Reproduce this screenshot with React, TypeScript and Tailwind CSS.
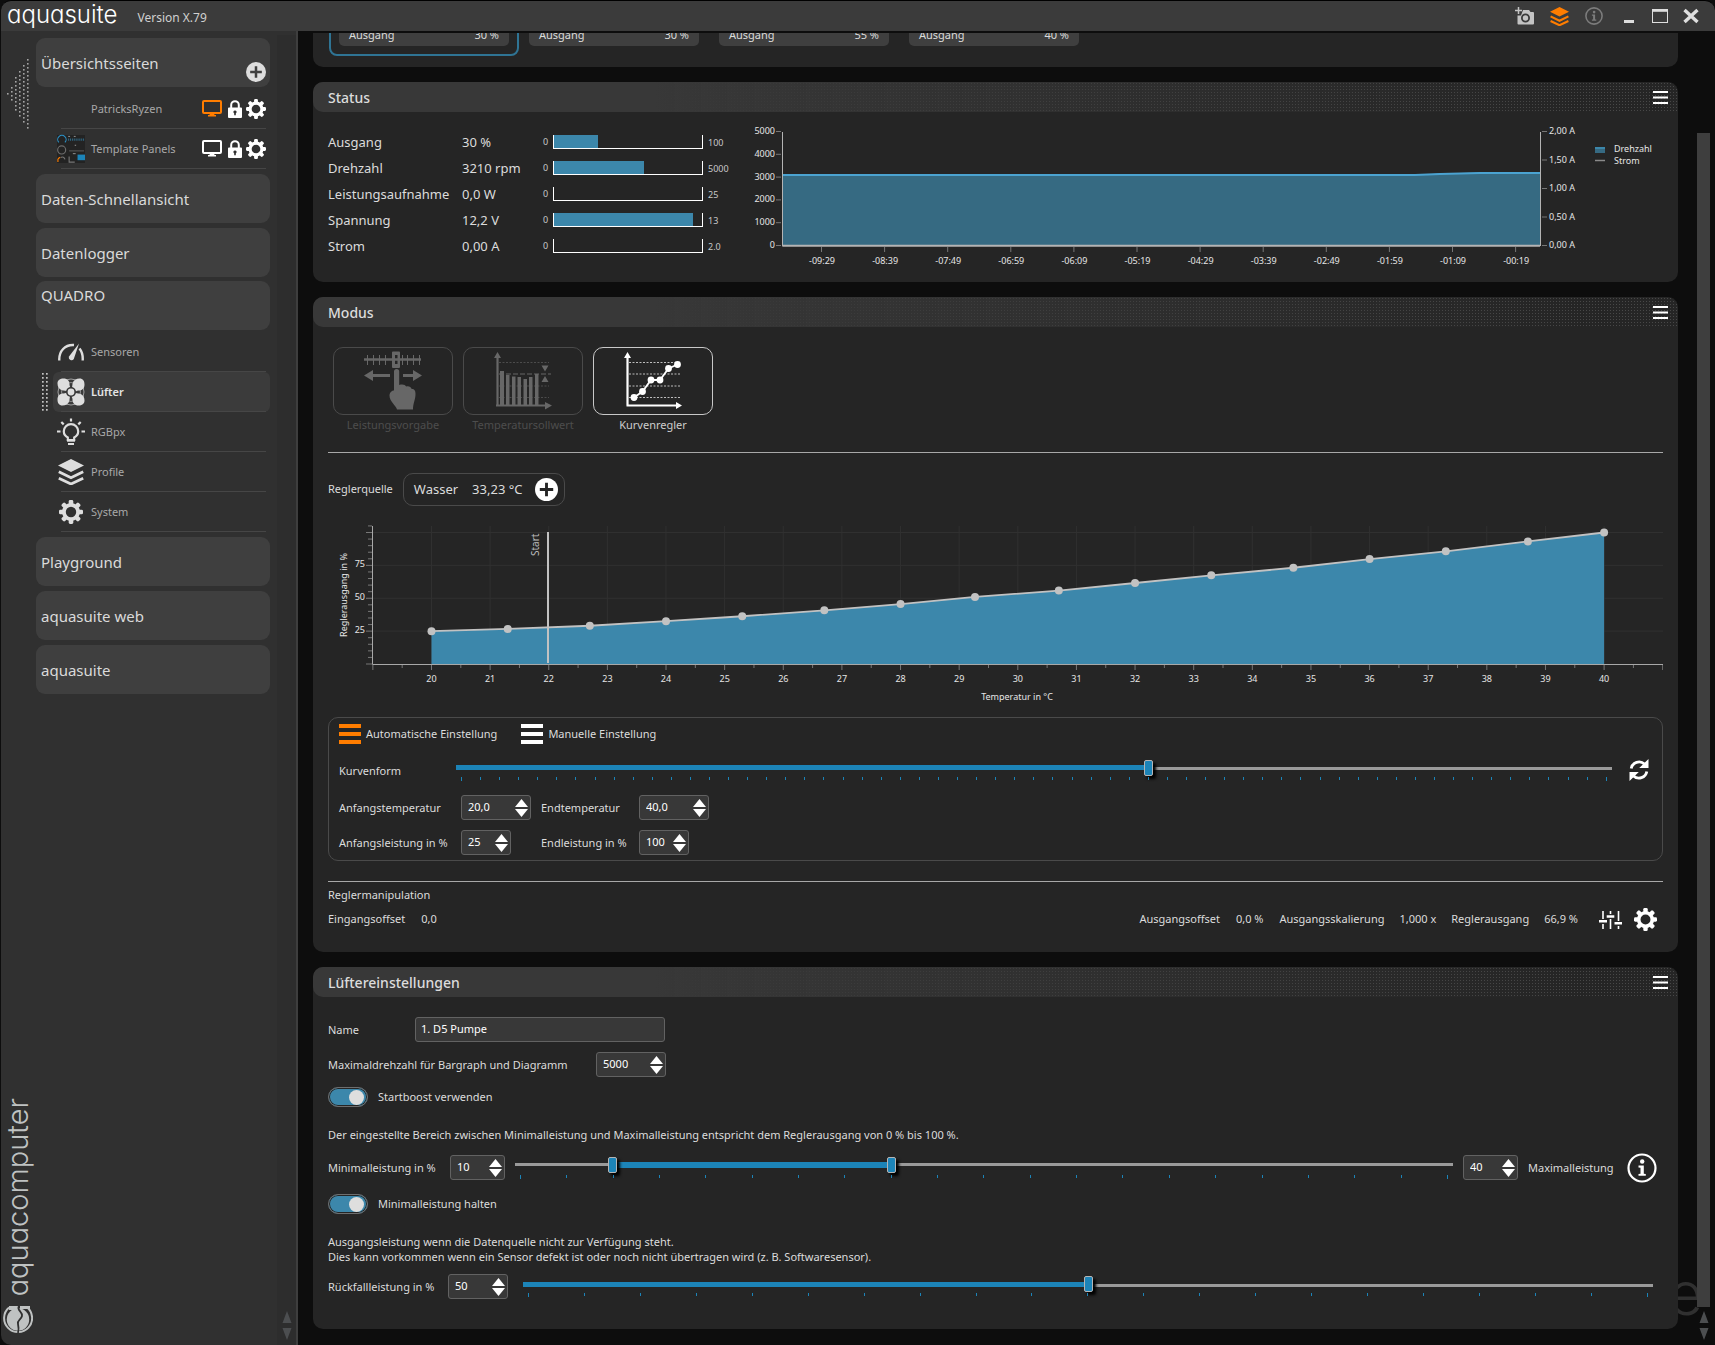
import { useState, type ReactNode } from "react";

// ---------- data ----------
const TOP_CARDS = ["30 %", "30 %", "55 %", "40 %"];

const STATUS_ROWS = [
  { label: "Ausgang", value: "30 %", max: "100", fill: 30 },
  { label: "Drehzahl", value: "3210 rpm", max: "5000", fill: 61 },
  { label: "Leistungsaufnahme", value: "0,0 W", max: "25", fill: 0 },
  { label: "Spannung", value: "12,2 V", max: "13", fill: 94 },
  { label: "Strom", value: "0,00 A", max: "2.0", fill: 0 },
];

const TIME_LABELS = [
  "-09:29", "-08:39", "-07:49", "-06:59", "-06:09", "-05:19",
  "-04:29", "-03:39", "-02:49", "-01:59", "-01:09", "-00:19",
];

// [Temperatur, Reglerausgang]
const CURVE: Array<[number, number]> = [
  [20, 25], [21.3, 26.7], [22.7, 29.1], [24, 32.6], [25.3, 36.3], [26.7, 40.8],
  [28, 45.6], [29.27, 51], [30.7, 55.8], [32, 61.6], [33.3, 67.4], [34.7, 73.2],
  [36, 79.8], [37.3, 85.7], [38.7, 93.2], [40, 100],
];

const range = (n: number) => Array.from({ length: n }, (_, i) => i);

// ---------- icons ----------
function GearIcon({ size = 20 }: { size?: number }) {
  return (
    <svg width={size} height={size} viewBox="0 0 24 24" fill="currentColor" aria-hidden="true">
      <circle cx="12" cy="12" r="7.1" fill="none" stroke="currentColor" strokeWidth="3.8" />
      {range(8).map((i) => (
        <rect key={i} x="9.7" y="0" width="4.6" height="5" rx="1.4" transform={`rotate(${i * 45} 12 12)`} />
      ))}
    </svg>
  );
}

function LayersIcon({ size = 26 }: { size?: number }) {
  return (
    <svg width={size} height={size} viewBox="0 0 26 26" aria-hidden="true">
      <path d="M13 0 26 6.5 13 13 0 6.5z" fill="currentColor" />
      <path d="M.8 12.8 13 18.8 25.2 12.8M.8 19.2 13 25 25.2 19.2" fill="none" stroke="currentColor" strokeWidth="2.8" />
    </svg>
  );
}

function PlusCircleIcon({ size, ink }: { size: number; ink: string }) {
  return (
    <svg width={size} height={size} viewBox="0 0 24 24" aria-hidden="true">
      <circle cx="12" cy="12" r="12" fill="currentColor" />
      <path d="M12 5v14M5 12h14" stroke={ink} strokeWidth="3" />
    </svg>
  );
}

function MonitorIcon() {
  return (
    <svg width="20" height="17" viewBox="0 0 20 17" aria-hidden="true">
      <rect x="1" y="1" width="18" height="12" rx="1" fill="none" stroke="currentColor" strokeWidth="2" />
      <path d="M8 13.5h4l.6 1.5H14v1.4H6V15h1.4z" fill="currentColor" />
    </svg>
  );
}

function LockIcon() {
  return (
    <svg width="14" height="18" viewBox="0 0 14 18" aria-hidden="true">
      <path d="M3.2 8V5a3.8 3.8 0 0 1 7.6 0v3" fill="none" stroke="currentColor" strokeWidth="2" />
      <path
        fillRule="evenodd"
        fill="currentColor"
        d="M1 7.4h12a1 1 0 0 1 1 1V17a1 1 0 0 1-1 1H1a1 1 0 0 1-1-1V8.4a1 1 0 0 1 1-1zM7 10.4a1.6 1.6 0 0 0-.8 3v1.8h1.6v-1.8a1.6 1.6 0 0 0-.8-3z"
      />
    </svg>
  );
}

function GaugeIcon() {
  return (
    <svg width="26" height="18" viewBox="0 0 26 18" aria-hidden="true">
      <g fill="none" stroke="currentColor" strokeWidth="2.4">
        <path d="M1.3 17.5C.8 8 7 1.4 16 2" />
        <path d="M21.5 5.5c2.5 3 3.5 7 3.2 12" />
      </g>
      <path d="M21 .5 15.8 16a2.8 2.8 0 0 1-5-2.2z" fill="currentColor" />
    </svg>
  );
}

function FanIcon() {
  return (
    <svg width="28" height="28" viewBox="0 0 28 28" aria-hidden="true">
      <circle cx="14" cy="14" r="13" fill="none" stroke="#a0a0a0" strokeWidth="1" />
      <circle cx="14" cy="14" r="9.5" fill="none" stroke="#8a8a8a" strokeWidth="1.2" />
      {[0, 90, 180, 270].map((a) => (
        <path
          key={a}
          transform={`rotate(${a} 14 14)`}
          fill="currentColor"
          d="M.5 5.5C.5 2 3 .5 6.500.5c4 0 6 2.500 6 6 0 2 1 3 2 4l-3.500 3.500c-1.500-1.500-4-1.200-6-1.700C2 11.500.5 8.500.5 5.500z"
        />
      ))}
      <circle cx="14" cy="14" r="5" fill="#333" />
      <circle cx="14" cy="14" r="3.4" fill="currentColor" />
    </svg>
  );
}

function BulbIcon() {
  return (
    <svg width="28" height="28" viewBox="0 0 28 28" aria-hidden="true">
      <g fill="none" stroke="currentColor" strokeWidth="2.2">
        <path d="M10.8 22v-2.5c-3-1.5-4-4-4-6.200a7.200 7.200 0 0 1 14.400 0c0 2.200-1 4.700-4 6.200V22z" />
        <path d="M11 26h6M14 .5v3M0 13.500h3.500M24.500 13.500H28M4.300 4l2.400 2.400M23.700 4l-2.400 2.400" />
      </g>
      <path d="M10 21.5h8v2.2h-8z" fill="currentColor" />
    </svg>
  );
}

function RefreshIcon() {
  return (
    <svg width="20" height="22" viewBox="0 0 20 22" aria-hidden="true">
      <g fill="none" stroke="currentColor" strokeWidth="2.8">
        <path d="M2.2 9.5A8 8 0 0 1 15.5 5" />
        <path d="M17.8 12.5A8 8 0 0 1 4.5 17" />
      </g>
      <path d="M19.5 0v9h-9.3zM.5 22v-9h9.3z" fill="currentColor" />
    </svg>
  );
}

function SlidersIcon() {
  return (
    <svg width="23" height="20" viewBox="0 0 23 20" aria-hidden="true">
      <path d="M4 1v8M4 14v5M11.5 1v3M11.5 9v10M19.5 1v10M19.5 16v3" stroke="currentColor" strokeWidth="1.6" />
      <path d="M0 10h8v2.6H0zM7.7 5.2h7.6v2.6H7.7zM15.5 12H23v2.6h-7.5z" fill="currentColor" />
    </svg>
  );
}

function InfoIcon({ size, width }: { size: number; width: number }) {
  return (
    <svg width={size} height={size} viewBox="0 0 30 30" aria-hidden="true">
      <circle cx="15" cy="15" r="13.5" fill="none" stroke="currentColor" strokeWidth={width} />
      <circle cx="15.2" cy="8.5" r="2.2" fill="currentColor" />
      <path d="M11.5 12.5h5.3v8.2l2 .3v1.800h-7.300V21l2-.3v-6l-2-.3z" fill="currentColor" />
    </svg>
  );
}

function CameraIcon() {
  return (
    <svg width="19" height="18" viewBox="0 0 19 18" aria-hidden="true">
      <path d="M3.5 0v7M0 3.5h7" stroke="currentColor" strokeWidth="1.5" />
      <path d="M8 3h6l1.5 2H18a1 1 0 0 1 1 1v10.500a1 1 0 0 1-1 1H3.500a1 1 0 0 1-1-1V8.500H6z" fill="currentColor" />
      <circle cx="10.5" cy="11" r="3.6" fill="none" stroke="#3b3b3b" strokeWidth="1.8" />
    </svg>
  );
}

function BurgerIcon({ width, height, bar }: { width: number; height: number; bar: number }) {
  return (
    <svg width={width} height={height} viewBox={`0 0 ${width} ${height}`} fill="currentColor" aria-hidden="true">
      <rect width={width} height={bar} />
      <rect y={(height - bar) / 2} width={width} height={bar} />
      <rect y={height - bar} width={width} height={bar} />
    </svg>
  );
}

function TemplateThumb() {
  return (
    <svg width="30" height="30" viewBox="0 0 30 30" aria-hidden="true">
      <rect width="30" height="30" fill="#232323" />
      <g fill="none" strokeWidth="1.2">
        <path d="M2 8a4.5 4.5 0 1 1 6.5 0" stroke="#2b8fc4" />
        <circle cx="5" cy="16" r="4.3" stroke="#6d6d6d" />
        <path d="M1 29v-3a4.5 4.5 0 0 1 2.5-2" stroke="#ff7d00" />
        <path d="M4 24c2-1 4 0 4.5 2M13 23v6h6" stroke="#777" />
        <path d="M13 17h16" stroke="#555" />
      </g>
      <path d="M12 5h17" stroke="#2f6d8c" strokeWidth="2.5" strokeDasharray="1 1" />
      <path d="M12 1.5h2M18 1.5h2M19 11h1.5M17 20h3" stroke="#999" />
      <rect x="22" y="21" width="8" height="6" fill="#1c84b8" />
    </svg>
  );
}

// Dreieck aus Punkten zum Einklappen der Seitenleiste
function CollapseDots() {
  return (
    <svg width="22" height="74" viewBox="0 0 22 74" fill="#a5a5a5" aria-hidden="true">
      {[1, 4, 9, 12, 15, 18].map((n, col) =>
        range(n).map((r) => (
          <rect key={`${col}-${r}`} x={col * 4} y={36 + (r - (n - 1) / 2) * 4} width="1.6" height="1.6" />
        ))
      )}
    </svg>
  );
}

function BrandIcon() {
  return (
    <svg width="30" height="30" viewBox="0 0 30 30" aria-hidden="true">
      <path d="M6 3.5a14 14 0 1 0 18-.2" fill="none" stroke="#bfc2c2" strokeWidth="2" />
      <circle cx="15" cy="15.5" r="11.2" fill="#bfc2c2" />
      <path d="M6 2h9v4H6zM17 2h10v3H17z" fill="#bfc2c2" />
      <path d="M16 2c-3 4 4 6 3 10s-5 4-4 8 1 5 0 9" fill="none" stroke="#303030" strokeWidth="1.8" />
    </svg>
  );
}

function ScrollArrows() {
  return (
    <svg width="10" height="30" viewBox="0 0 10 30" fill="#4c4e50" aria-hidden="true">
      <path d="M5 0 9.5 12h-9zM.5 17h9L5 29z" />
    </svg>
  );
}

// ---------- form controls ----------
function NumberBox({ id, value, label, className }: { id: string; value: string; label?: string; className: string }) {
  const [val, setVal] = useState(value);
  return (
    <div className={`flex h-[25px] shrink-0 items-center rounded-[3px] border border-[#626262] bg-[#383838] pr-0.5 pl-1.5 ${className}`}>
      <input
        id={id}
        aria-label={label}
        value={val}
        onChange={(e) => setVal(e.target.value)}
        className="min-w-0 flex-1 bg-transparent text-[11px] text-white outline-none"
      />
      <div className="flex flex-col gap-0.5">
        <button type="button" aria-label="Wert erhöhen" className="block text-white">
          <svg width="13" height="8" viewBox="0 0 13 8" fill="currentColor"><path d="M6.5 0 13 8H0z" /></svg>
        </button>
        <button type="button" aria-label="Wert verringern" className="block text-white">
          <svg width="13" height="8" viewBox="0 0 13 8" fill="currentColor"><path d="M0 0h13L6.5 8z" /></svg>
        </button>
      </div>
    </div>
  );
}

const THUMB =
  "[&::-webkit-slider-thumb]:h-4 [&::-webkit-slider-thumb]:w-[9px] [&::-webkit-slider-thumb]:appearance-none [&::-webkit-slider-thumb]:rounded-[2px] [&::-webkit-slider-thumb]:border [&::-webkit-slider-thumb]:border-[#b5b5b5] [&::-webkit-slider-thumb]:bg-[#1c84b8] [&::-webkit-slider-thumb]:shadow-[3px_3px_3px_#000]";

function Ticks({ count }: { count: number }) {
  return (
    <div className="flex h-1 justify-between px-[5px]">
      {range(count).map((i) => (
        <span key={i} className={i === 0 || i === count - 1 ? "h-1 w-px bg-[#1c84b8]" : "h-[3px] w-px bg-[#1c84b8]"} />
      ))}
    </div>
  );
}

function Slider({ label, value, ticks }: { label: string; value: number; ticks: number }) {
  const [val, setVal] = useState(value);
  return (
    <div className="flex min-w-0 flex-1 flex-col gap-px">
      <input
        type="range"
        aria-label={label}
        value={val}
        onChange={(e) => setVal(Number(e.target.value))}
        className={`h-4 w-full appearance-none bg-transparent bg-no-repeat ${THUMB}`}
        style={{
          backgroundImage: "linear-gradient(#1c84b8,#1c84b8),linear-gradient(#9a9a9a,#9a9a9a)",
          backgroundSize: `${val}% 5px, 100% 3px`,
          backgroundPosition: "0 50%, 0 60%",
        }}
      />
      <Ticks count={ticks} />
    </div>
  );
}

function RangeSlider({ from, to }: { from: number; to: number }) {
  const [lo, setLo] = useState(from);
  const [hi, setHi] = useState(to);
  const layer = `pointer-events-none col-start-1 row-start-1 h-4 w-full appearance-none bg-transparent [&::-webkit-slider-thumb]:pointer-events-auto ${THUMB}`;
  return (
    <div className="flex min-w-0 flex-1 flex-col gap-0.5">
      <div className="grid items-center">
        <div className="col-start-1 row-start-1 h-[3px] bg-[#9a9a9a]" />
        <div
          className="col-start-1 row-start-1 h-[6px] bg-[#1c84b8]"
          style={{ marginLeft: `${lo}%`, marginRight: `${100 - hi}%` }}
        />
        <input type="range" aria-label="Minimalleistung" value={lo} onChange={(e) => setLo(Number(e.target.value))} className={layer} />
        <input type="range" aria-label="Maximalleistung" value={hi} onChange={(e) => setHi(Number(e.target.value))} className={layer} />
      </div>
      <Ticks count={21} />
    </div>
  );
}

function Toggle({ label }: { label: string }) {
  return (
    <label className="flex h-[30px] items-center gap-2.5">
      <input
        type="checkbox"
        role="switch"
        defaultChecked
        className="flex h-5 w-10 appearance-none items-center justify-end rounded-full border border-[#6e6e6e] bg-[#3c87ab] pr-[3px] shadow-[inset_0_0_0_1px_#252525] before:block before:size-[15px] before:rounded-full before:bg-[#dedede] before:content-['']"
      />
      {label}
    </label>
  );
}

// ---------- layout pieces ----------
function Panel({ title, children }: { title: string; children: ReactNode }) {
  return (
    <section className="rounded-[10px] bg-[#252525]">
      <header className="flex h-[30px] items-center justify-between rounded-t-[10px] rounded-bl-[10px] bg-[linear-gradient(90deg,#383838_0%,#383838_25%,#25252500_95%),radial-gradient(circle,#484848_0.600px,#25252500_0.900px)] bg-[size:100%_100%,3px_3px] pr-2.5 pl-[15px]">
        <h2 className="pt-0.5 text-sm font-medium text-[#dcdcdc]">{title}</h2>
        <button type="button" aria-label={`Menü ${title}`} className="text-white">
          <BurgerIcon width={15} height={13} bar={2} />
        </button>
      </header>
      {children}
    </section>
  );
}

function NavItem({ label, children }: { label: string; children?: ReactNode }) {
  return (
    <div className="flex h-[49px] justify-between rounded-[9px] bg-[#3f3f3f] pr-1 pl-[5px]">
      <a href="#" className="flex flex-1 items-center pt-0.5 text-[15px] text-[#dadada]">{label}</a>
      {children}
    </div>
  );
}

function NavRow({ label, icon, active = false, children }: { label: string; icon?: ReactNode; active?: boolean; children?: ReactNode }) {
  return (
    <li className="flex h-10">
      <div className="flex w-[17px] items-center justify-center">
        {active && (
          <svg width="6" height="38" viewBox="0 0 6 38" fill="#c4c4c4" aria-hidden="true">
            {range(20).map((i) => (
              <rect key={i} x={(i % 2) * 4} y={Math.floor(i / 2) * 4} width="1.7" height="1.7" />
            ))}
          </svg>
        )}
      </div>
      <div className={`flex min-w-0 flex-1 flex-col ${active ? "rounded-md bg-[#3b3b3b]" : ""}`}>
        <div className="flex flex-1 items-center pr-1 pl-1">
          <span className="flex w-7 shrink-0 justify-center text-[#dedede]">{icon}</span>
          <a href="#" className={`ml-1.5 flex-1 pt-0.5 text-[11px] whitespace-nowrap ${active ? "font-semibold text-[#e4e4e4]" : "text-[#a8a8a8]"}`}>{label}</a>
          {children}
        </div>
        <div className="mr-1 ml-2 h-px bg-[#464646]" />
      </div>
    </li>
  );
}

function PageTools({ live = false }: { live?: boolean }) {
  return (
    <div className="flex items-center text-white">
      <button type="button" aria-label="Auf Desktop anzeigen" className={live ? "text-[#ff7d00]" : ""}><MonitorIcon /></button>
      <button type="button" aria-label="Sperren" className="ml-1.5"><LockIcon /></button>
      <button type="button" aria-label="Einstellungen" className="ml-1"><GearIcon /></button>
    </div>
  );
}

function Sidebar() {
  return (
    <aside className="flex w-[297px] shrink-0 rounded-bl-[10px] border-r-2 border-[#3e3e3e] bg-[#303030]">
      <div className="flex w-[35px] flex-col items-center justify-between pt-[26px] pr-0.5 pb-[11px]">
        <button type="button" aria-label="Seitenleiste einklappen"><CollapseDots /></button>
        <div className="flex flex-col items-center gap-2">
          <span className="rotate-180 font-['Inter'] text-[29px] leading-[30px] font-light text-[#bfc2c2] [font-feature-settings:'cv11'] [writing-mode:vertical-rl]">
            aquacomputer
          </span>
          <BrandIcon />
        </div>
      </div>
      <nav className="min-w-0 flex-1 pt-[7px] pr-[7px]">
        <NavItem label="Übersichtsseiten">
          <button type="button" aria-label="Seite hinzufügen" className="self-end pb-[5px] text-[#dedede]">
            <PlusCircleIcon size={20} ink="#3f3f3f" />
          </button>
        </NavItem>
        <ul className="mt-0.5 mb-[5px]">
          <NavRow label="PatricksRyzen"><PageTools live /></NavRow>
          <NavRow label="Template Panels" icon={<TemplateThumb />}><PageTools /></NavRow>
        </ul>
        <div className="flex flex-col gap-[5px]">
          <NavItem label="Daten-Schnellansicht" />
          <NavItem label="Datenlogger" />
        </div>
        <div className="mt-1 flex h-[49px] rounded-[9px] bg-[#3f3f3f] pt-[3px] pl-[5px]">
          <a href="#" className="text-[15px] text-[#dadada]">QUADRO</a>
        </div>
        <ul className="mt-0.5 mb-[5px]">
          <NavRow label="Sensoren" icon={<GaugeIcon />} />
          <NavRow label="Lüfter" icon={<FanIcon />} active />
          <NavRow label="RGBpx" icon={<BulbIcon />} />
          <NavRow label="Profile" icon={<LayersIcon />} />
          <NavRow label="System" icon={<GearIcon size={24} />} />
        </ul>
        <div className="flex flex-col gap-[5px]">
          <NavItem label="Playground" />
          <NavItem label="aquasuite web" />
          <NavItem label="aquasuite" />
        </div>
      </nav>
      <div className="mt-1 flex w-[19px] items-end justify-center bg-[#2d2d2d] pb-1">
        <ScrollArrows />
      </div>
    </aside>
  );
}

function TitleBar() {
  return (
    <header className="flex h-[31px] shrink-0 items-center rounded-t-[10px] border-t border-black bg-[#3b3b3b] pr-4 pl-1.5">
      <h1 className="pb-0.5 font-['Inter'] text-2xl leading-7 font-light text-white [font-feature-settings:'cv11']">aquasuite</h1>
      <span className="mt-1 ml-5 text-xs text-[#d0d0d0]">Version X.79</span>
      <div className="ml-auto flex items-center gap-4 text-[#c4c4c4]">
        <button type="button" aria-label="Screenshot"><CameraIcon /></button>
        <button type="button" aria-label="Profile" className="text-[#ff7d00]"><LayersIcon size={19} /></button>
        <button type="button" aria-label="Info" className="text-[#7c7c7c]"><InfoIcon size={18} width={2.6} /></button>
      </div>
      <div className="ml-[18px] flex items-center gap-[15px] text-[#dedede]">
        <button type="button" aria-label="Minimieren">
          <svg width="16" height="16" viewBox="0 0 16 16"><path d="M3 13.5h10" stroke="currentColor" strokeWidth="3" /></svg>
        </button>
        <button type="button" aria-label="Maximieren">
          <svg width="16" height="16" viewBox="0 0 16 16" fill="none" stroke="currentColor">
            <rect x=".5" y="1.5" width="15" height="13" />
            <path d="M0 2.5h16" strokeWidth="2.6" />
          </svg>
        </button>
        <button type="button" aria-label="Schließen">
          <svg width="16" height="16" viewBox="0 0 16 16"><path d="m1.5 2 13 12M14.500 2l-13 12" stroke="currentColor" strokeWidth="3.4" /></svg>
        </button>
      </div>
    </header>
  );
}

// ---------- charts ----------
function SpeedChart() {
  return (
    <svg viewBox="743 112 920 170" className="block w-full text-[9px]" fill="#e6e6e6" role="img" aria-label="Verlauf Drehzahl und Strom">
      <path d="M783 175H1415L1440 173.500 1480 172.500H1540V245H783z" fill="#366a82" />
      <path d="M783 175H1415L1440 174 1480 173H1540" fill="none" stroke="#4ba3d1" strokeWidth="2" />
      <path d="M782.500 132V246.500M1540.500 132V246" stroke="#b4b4b4" fill="none" />
      <path d="M783 245.800H1540" stroke="#b4b4b4" strokeWidth="2" />
      {[5000, 4000, 3000, 2000, 1000, 0].map((v, i) => (
        <g key={v}>
          <path d={`M776 ${131.5 + i * 22.8}h5`} stroke="#777" />
          <text x="775" y={134 + i * 22.8} textAnchor="end">{v}</text>
        </g>
      ))}
      {["2,00 A", "1,50 A", "1,00 A", "0,50 A", "0,00 A"].map((t, i) => (
        <g key={t}>
          <path d={`M1542 ${131.5 + i * 28.5}h5`} stroke="#777" />
          <text x="1549" y={134 + i * 28.5}>{t}</text>
        </g>
      ))}
      {TIME_LABELS.map((t, i) => (
        <g key={t}>
          <path d={`M${821.5 + i * 63.1} 247v5`} stroke="#777" />
          <text x={822 + i * 63.1} y="264" textAnchor="middle">{t}</text>
        </g>
      ))}
      <rect x="1595" y="147" width="10" height="6" fill="#366a82" />
      <path d="M1595 148h10" stroke="#3c87ab" strokeWidth="2" />
      <path d="M1595 160.500h10" stroke="#8a8a8a" strokeWidth="1.500" />
      <text x="1614" y="152">Drehzahl</text>
      <text x="1614" y="164">Strom</text>
    </svg>
  );
}

const cx = (t: number) => 431.5 + (t - 20) * 58.63;
const cy = (v: number) => 664 - v * 1.315;

function CurveChart() {
  const line = CURVE.map(([t, v]) => `${cx(t)},${cy(v)}`).join(" ");
  return (
    <svg viewBox="328 506 1335 211" className="block w-full text-[9px]" fill="#e6e6e6" role="img" aria-label="Reglerkurve">
      {range(21).map((i) => (
        <path key={i} d={`M${cx(20 + i)} 526V664`} stroke="#303030" />
      ))}
      {[25, 50, 75, 100].map((v) => (
        <path key={v} d={`M372 ${cy(v)}H1663`} stroke="#303030" />
      ))}
      <polygon points={`${cx(20)},664 ${line} ${cx(40)},664`} fill="#3c87ab" />
      <path d="M372.500 526V664.500H1663" fill="none" stroke="#a8a8a8" />
      {range(22).map((i) => (
        <path key={i} d={`M372 ${cy(i * 5)}h${i % 5 === 0 ? -6 : -4}`} stroke="#777" />
      ))}
      {range(45).map((i) => (
        <path key={i} d={`M${cx(19 + i / 2)} 665v${i % 2 === 0 ? 5 : 3}`} stroke="#777" />
      ))}
      {[25, 50, 75].map((v) => (
        <text key={v} x="365" y={cy(v) + 2} textAnchor="end">{v}</text>
      ))}
      {range(21).map((i) => (
        <text key={i} x={cx(20 + i)} y="682" textAnchor="middle">{20 + i}</text>
      ))}
      <polyline points={line} fill="none" stroke="#c2c2c2" strokeWidth="1.8" />
      {CURVE.map(([t, v]) => (
        <circle key={t} cx={cx(t)} cy={cy(v)} r="4" fill="#c2c2c2" />
      ))}
      <path d="M548 532V663" stroke="#c2c2c2" strokeWidth="2" />
      <text transform="translate(539 556) rotate(-90)" fill="#bdbdbd" className="text-[10px]">Start</text>
      <text transform="translate(347 595) rotate(-90)" textAnchor="middle">Reglerausgang in %</text>
      <text x="1017" y="700" textAnchor="middle">Temperatur in °C</text>
    </svg>
  );
}

// ---------- Modus buttons ----------
function ManualArt() {
  return (
    <svg width="118" height="66" viewBox="1 1 118 66" fill="currentColor" aria-hidden="true">
      <path d="M31 12.500h57" stroke="currentColor" strokeWidth="2.6" />
      <path d="M34.500 8v10M40.500 8v10M46.500 8v10M52.500 8v10M69.500 8v10M74.500 8v10M80.500 8v10M86.500 8v10" stroke="currentColor" />
      <path fillRule="evenodd" d="M60 4.500h6a1 1 0 0 1 1 1V20a1 1 0 0 1-1 1h-6a1 1 0 0 1-1-1V5.500a1 1 0 0 1 1-1zM62 8v9h2.500V8z" />
      <path d="M31 28.500 40 23v4h17v3H40v4zM89 28.500 80 23v4H70v3h10v4z" />
      <path d="M61 24.500a2.600 2.600 0 0 1 5.200 0V38c4-1 6 0 7 1.500 3-.5 4.500.5 5.500 2.500 3 0 3.800 2 3.800 5 0 6-2.500 9-2.500 15.500H64c-1-4-7.500-8-7.500-14 0-3 2.500-5 4.500-5z" />
    </svg>
  );
}

function SetpointArt() {
  return (
    <svg width="118" height="66" viewBox="1 1 118 66" fill="currentColor" aria-hidden="true">
      <path d="M34.500 58.500V9M33 58.500h50" stroke="currentColor" strokeWidth="2.2" fill="none" />
      <path d="m34.500 5 3.500 6h-7zM89 58.500 82 55v7.500z" />
      <path d="M36 15.500h50M36 39h50M36 50.500h50" stroke="currentColor" strokeDasharray="2 1.5" opacity=".6" />
      <path d="M36 27h52" stroke="currentColor" strokeDasharray="5 2" />
      <path d="M37 24h4v34h-4zM43 28h3.500v30H43zM49 29.500h3.500V58H49zM54.500 30H58v28h-3.500zM60.500 32H64v26h-3.500zM66 30h3.500v28H66zM72 27h3.500v31H72z" />
      <path d="M78.500 18.500h7L82 24.500zM82 29l3.500 6h-7z" />
    </svg>
  );
}

function CurveArt() {
  const pts = [[41, 50.5], [49.5, 44.5], [58, 33], [67, 33], [75.5, 21.5], [84.5, 17.5]];
  return (
    <svg width="118" height="66" viewBox="1 1 118 66" fill="currentColor" aria-hidden="true">
      <path d="M34.500 58.500V9M33.500 58.500h50" stroke="currentColor" strokeWidth="2.2" fill="none" />
      <path d="m34.500 5 3.500 6h-7zM89 58.500 83 55v7z" />
      <path d="M36 15.500h51M36 27h51M36 39h51M36 50.500h51" stroke="currentColor" strokeDasharray="2 1.5" opacity=".7" />
      <polyline points={pts.map((p) => p.join(",")).join(" ")} fill="none" stroke="currentColor" strokeWidth="1.8" />
      {pts.map(([x, y]) => (
        <circle key={x} cx={x} cy={y} r="3.4" />
      ))}
    </svg>
  );
}

function ModeButton({ label, art, active = false }: { label: string; art: ReactNode; active?: boolean }) {
  return (
    <button type="button" aria-pressed={active} className={`block w-[120px] ${active ? "text-white" : "text-[#676767]"}`}>
      <span className={`block h-[68px] overflow-hidden rounded-[10px] border ${active ? "border-[#c8c8c8]" : "border-[#4a4a4a]"}`}>{art}</span>
      <span className={`block text-center text-[11px] leading-5 ${active ? "text-[#cdcdcd]" : "text-[#4d4d4d]"}`}>{label}</span>
    </button>
  );
}

// ---------- main panels ----------
function FanStrip() {
  return (
    <section className="mt-0.5 flex h-[34px] items-end overflow-hidden rounded-b-[10px] bg-[#252525] pb-[11px] pl-4">
      {TOP_CARDS.map((v, i) => (
        <div
          key={i}
          className={`shrink-0 border-2 px-2 pb-2 ${i === 0 ? "rounded-lg border-[#2f7494]" : "border-transparent"}`}
        >
          <div className="flex h-12 w-[170px] items-end justify-between rounded-[5px] bg-[#3f3f3f] px-2.5 pb-0.5 leading-[18px] text-[#dadada]">
            <span>Ausgang</span>
            <span>{v}</span>
          </div>
        </div>
      ))}
    </section>
  );
}

function StatusPanel() {
  return (
    <Panel title="Status">
      <div className="flex px-[15px]">
        <table className="mt-[17px] w-[415px] shrink-0 table-fixed self-start text-[13px]">
          <tbody>
            {STATUS_ROWS.map((r) => (
              <tr key={r.label} className="h-[26px]">
                <th scope="row" className="w-[134px] pt-0.5 text-left font-normal">{r.label}</th>
                <td className="w-[76px] pt-0.5 whitespace-nowrap">{r.value}</td>
                <td>
                  <div className="flex items-center text-[9px] text-[#c8c8c8]">
                    <span className="w-[15px] text-center">0</span>
                    <div className="h-[14px] w-[150px] border-x border-b border-white">
                      <div className="h-full bg-[#3c87ab]" style={{ width: `${r.fill}%` }} />
                    </div>
                    <span className="ml-[5px] pt-0.5">{r.max}</span>
                  </div>
                </td>
              </tr>
            ))}
          </tbody>
        </table>
        <div className="min-w-0 flex-1">
          <SpeedChart />
        </div>
      </div>
    </Panel>
  );
}

function ModePanel() {
  return (
    <Panel title="Modus">
      <div className="px-[15px] pt-5 pb-[19px]">
        <div className="flex gap-2.5 pl-[5px]">
          <ModeButton label="Leistungsvorgabe" art={<ManualArt />} />
          <ModeButton label="Temperatursollwert" art={<SetpointArt />} />
          <ModeButton label="Kurvenregler" art={<CurveArt />} active />
        </div>

        <div className="mt-[17px] flex items-center gap-2.5 border-t border-[#a8a8a8] pt-5">
          <span>Reglerquelle</span>
          <div className="flex h-[33px] items-center rounded-[10px] border border-[#4a4a4a] pr-1.5 pl-2.5 text-[13px]">
            <span>Wasser</span>
            <span className="mr-3 ml-3.5">33,23 °C</span>
            <button type="button" aria-label="Datenquelle wählen" className="text-white">
              <PlusCircleIcon size={23} ink="#252525" />
            </button>
          </div>
        </div>

        <CurveChart />

        <div className="rounded-[10px] border border-[#4a4a4a] px-2.5">
          <div className="flex h-[34px] items-center pb-0.5">
            <button type="button" className="flex items-center gap-[5px]">
              <span className="text-[#ff7d00]"><BurgerIcon width={22} height={20} bar={4} /></span>
              Automatische Einstellung
            </button>
            <button type="button" className="ml-6 flex items-center gap-[5px]">
              <span className="text-white"><BurgerIcon width={22} height={20} bar={4} /></span>
              Manuelle Einstellung
            </button>
          </div>
          <div className="flex h-[38px] items-center pb-0.5">
            <span className="w-[117px] shrink-0 pt-0.5">Kurvenform</span>
            <Slider label="Kurvenform" value={60} ticks={61} />
            <button type="button" aria-label="Zurücksetzen" className="ml-[17px] pr-[3px] text-white"><RefreshIcon /></button>
          </div>
          <div className="flex h-[35px] items-center">
            <label htmlFor="t-start" className="w-[122px] pt-0.5">Anfangstemperatur</label>
            <div className="w-[80px]"><NumberBox id="t-start" value="20,0" className="w-[70px]" /></div>
            <label htmlFor="t-end" className="w-[98px] pt-0.5">Endtemperatur</label>
            <NumberBox id="t-end" value="40,0" className="w-[70px]" />
          </div>
          <div className="flex h-[35px] items-center">
            <label htmlFor="p-start" className="w-[122px] pt-0.5">Anfangsleistung in %</label>
            <div className="w-[80px]"><NumberBox id="p-start" value="25" className="w-[50px]" /></div>
            <label htmlFor="p-end" className="w-[98px] pt-0.5">Endleistung in %</label>
            <NumberBox id="p-end" value="100" className="w-[50px]" />
          </div>
        </div>

        <div className="mt-5 border-t border-[#a8a8a8]">
          <h3 className="leading-[26px]">Reglermanipulation</h3>
          <div className="flex h-[25px] items-center pb-0.5 whitespace-nowrap">
            <span>Eingangsoffset</span>
            <span className="ml-4">0,0</span>
            <span className="ml-auto">Ausgangsoffset</span>
            <span className="ml-4">0,0 %</span>
            <span className="ml-4">Ausgangsskalierung</span>
            <span className="ml-[15px]">1,000 x</span>
            <span className="ml-[15px]">Reglerausgang</span>
            <span className="ml-[15px]">66,9 %</span>
            <button type="button" aria-label="Reglerparameter" className="ml-[21px] text-white"><SlidersIcon /></button>
            <button type="button" aria-label="Erweitert" className="mr-1.5 ml-3 text-white"><GearIcon size={23} /></button>
          </div>
        </div>
      </div>
    </Panel>
  );
}

function FanSettingsPanel() {
  return (
    <Panel title="Lüftereinstellungen">
      <div className="px-[15px] pt-[15px] pb-[25px]">
        <div className="flex h-[35px] items-center">
          <label htmlFor="fan-name" className="w-[87px] pt-0.5">Name</label>
          <input
            id="fan-name"
            defaultValue="1. D5 Pumpe"
            className="h-[25px] w-[250px] rounded-[3px] border border-[#626262] bg-[#383838] px-[5px] pb-0.5 text-[11px] text-white outline-none"
          />
        </div>
        <div className="flex h-[35px] items-center">
          <label htmlFor="fan-max" className="w-[268px] pt-0.5">Maximaldrehzahl für Bargraph und Diagramm</label>
          <NumberBox id="fan-max" value="5000" className="w-[70px]" />
        </div>
        <Toggle label="Startboost verwenden" />
        <p className="mt-[13px] leading-5">
          Der eingestellte Bereich zwischen Minimalleistung und Maximalleistung entspricht dem Reglerausgang von 0 % bis 100 %.
        </p>
        <div className="mt-[5px] flex h-[35px] items-center">
          <label htmlFor="p-min" className="w-[122px] shrink-0 pt-0.5">Minimalleistung in %</label>
          <NumberBox id="p-min" value="10" className="mr-2.5 w-[55px]" />
          <RangeSlider from={10} to={40} />
          <NumberBox id="p-max" value="40" className="ml-2.5 w-[55px]" />
          <label htmlFor="p-max" className="ml-2.5 w-[88px] pt-0.5">Maximalleistung</label>
          <button type="button" aria-label="Hilfe" className="mr-1.5 ml-[11px] text-white"><InfoIcon size={30} width={2.2} /></button>
        </div>
        <div className="mt-1"><Toggle label="Minimalleistung halten" /></div>
        <p className="mt-[15px] leading-[15px]">
          Ausgangsleistung wenn die Datenquelle nicht zur Verfügung steht.
          <br />
          Dies kann vorkommen wenn ein Sensor defekt ist oder noch nicht übertragen wird (z. B. Softwaresensor).
        </p>
        <div className="mt-[5px] flex h-[35px] items-center pr-2.5">
          <label htmlFor="p-fallback" className="w-[120px] shrink-0 pt-0.5">Rückfallleistung in %</label>
          <NumberBox id="p-fallback" value="50" className="mr-[15px] w-[60px]" />
          <Slider label="Rückfallleistung" value={50} ticks={21} />
        </div>
      </div>
    </Panel>
  );
}

export default function App() {
  return (
    <div className="flex min-h-screen flex-col bg-[#0d0d0d] pl-px font-['Noto_Sans',sans-serif] text-[11px] text-[#dcdcdc]">
      <TitleBar />
      <div className="flex flex-1">
        <Sidebar />
        <div className="relative isolate flex min-w-0 flex-1">
          {/* Wasserzeichen hinter den Panels */}
          <span aria-hidden="true" className="absolute right-3 bottom-[22px] -z-10 font-['Inter'] text-[60px] leading-[60px] font-light text-[#303030]">e</span>
          <main className="flex min-w-0 flex-1 flex-col gap-[15px] pb-4 pl-[15px]">
            <FanStrip />
            <StatusPanel />
            <ModePanel />
            <FanSettingsPanel />
          </main>
          <div className="flex w-[37px] flex-col items-end pt-[102px] pr-[5px]">
            <div className="w-[13px] flex-1 bg-[#3e3e3e]" />
            <div className="flex w-[13px] justify-center pt-1 pb-1"><ScrollArrows /></div>
          </div>
        </div>
      </div>
    </div>
  );
}
